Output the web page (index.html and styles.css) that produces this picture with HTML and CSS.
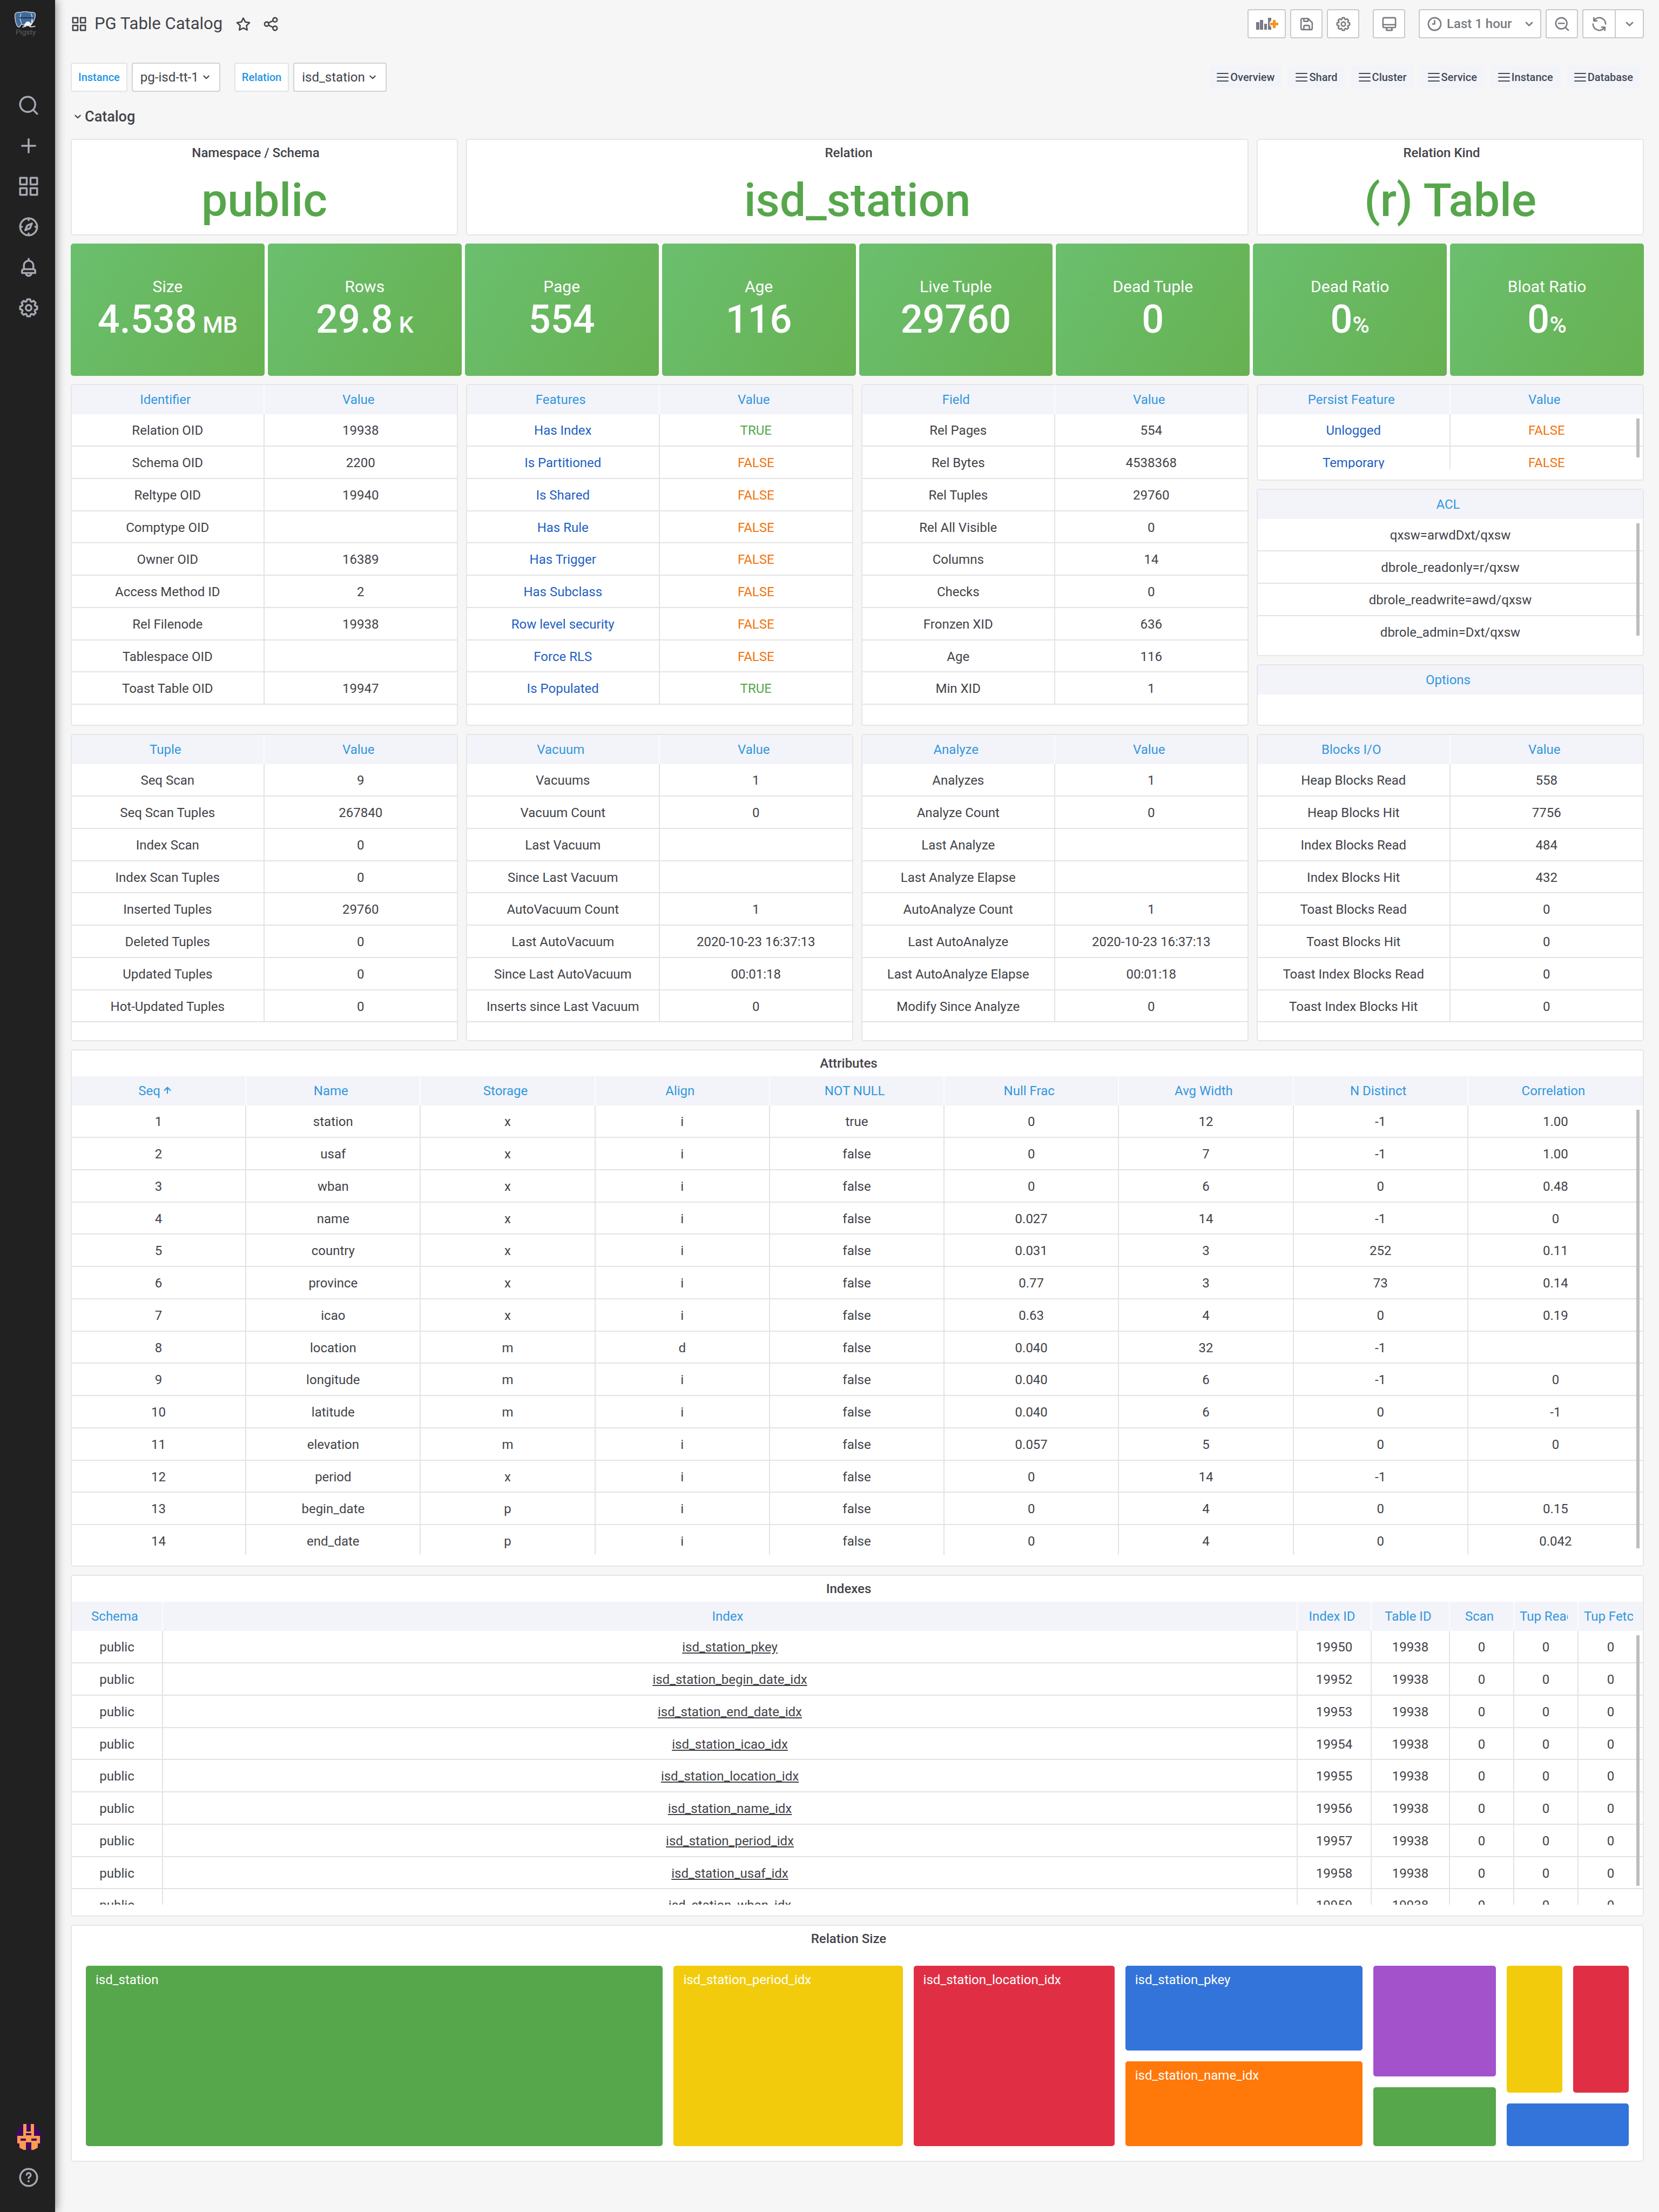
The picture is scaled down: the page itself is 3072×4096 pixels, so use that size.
FILE: index.html
```html
<!DOCTYPE html>
<html lang="en">
<head>
<meta charset="utf-8">
<title>PG Table Catalog</title>
<link rel="stylesheet" href="styles.css">
</head>
<body>
<svg class="sprite" aria-hidden="true">
  <symbol id="i-apps" viewBox="0 0 24 24"><path d="M10,13H3a1,1,0,0,0-1,1v7a1,1,0,0,0,1,1h7a1,1,0,0,0,1-1V14A1,1,0,0,0,10,13ZM9,20H4V15H9ZM21,2H14a1,1,0,0,0-1,1v7a1,1,0,0,0,1,1h7a1,1,0,0,0,1-1V3A1,1,0,0,0,21,2ZM20,9H15V4h5Zm1,4H14a1,1,0,0,0-1,1v7a1,1,0,0,0,1,1h7a1,1,0,0,0,1-1V14A1,1,0,0,0,21,13Zm-1,7H15V15h5ZM10,2H3A1,1,0,0,0,2,3v7a1,1,0,0,0,1,1h7a1,1,0,0,0,1-1V3A1,1,0,0,0,10,2ZM9,9H4V4H9Z"/></symbol>
  <symbol id="i-search" viewBox="0 0 24 24"><path d="M21.71,20.29,18,16.61A9,9,0,1,0,16.61,18l3.68,3.68a1,1,0,0,0,1.42,0A1,1,0,0,0,21.71,20.29ZM11,18a7,7,0,1,1,7-7A7,7,0,0,1,11,18Z"/></symbol>
  <symbol id="i-search-minus" viewBox="0 0 24 24"><path d="M21.71,20.29,18,16.61A9,9,0,1,0,16.61,18l3.68,3.68a1,1,0,0,0,1.42,0A1,1,0,0,0,21.71,20.29ZM11,18a7,7,0,1,1,7-7A7,7,0,0,1,11,18ZM15,10H7a1,1,0,0,0,0,2h8a1,1,0,0,0,0-2Z"/></symbol>
  <symbol id="i-plus" viewBox="0 0 24 24"><path d="M19,11H13V5a1,1,0,0,0-2,0v6H5a1,1,0,0,0,0,2h6v6a1,1,0,0,0,2,0V13h6a1,1,0,0,0,0-2Z"/></symbol>
  <symbol id="i-compass" viewBox="0 0 24 24"><path d="M12,2A10,10,0,1,0,22,12,10,10,0,0,0,12,2Zm1,17.93V19a1,1,0,0,0-2,0v.93A8,8,0,0,1,4.07,13H5a1,1,0,0,0,0-2H4.07A8,8,0,0,1,11,4.07V5a1,1,0,0,0,2,0V4.07A8,8,0,0,1,19.93,11H19a1,1,0,0,0,0,2h.93A8,8,0,0,1,13,19.93ZM15.14,7.55l-5,2.12a1,1,0,0,0-.52.52l-2.12,5a1,1,0,0,0,.21,1.1,1,1,0,0,0,.7.3.93.93,0,0,0,.4-.09l5-2.12a1,1,0,0,0,.52-.52l2.12-5a1,1,0,0,0-1.31-1.31Zm-2.49,5.1-2.28,1,1-2.28,2.28-1Z"/></symbol>
  <symbol id="i-bell" viewBox="0 0 24 24"><path d="M18,13.18V10a6,6,0,0,0-5-5.91V3a1,1,0,0,0-2,0V4.09A6,6,0,0,0,6,10v3.18A3,3,0,0,0,4,16v2a1,1,0,0,0,1,1H8.14a4,4,0,0,0,7.72,0H19a1,1,0,0,0,1-1V16A3,3,0,0,0,18,13.18ZM8,10a4,4,0,0,1,8,0v3H8Zm4,10a2,2,0,0,1-1.72-1h3.44A2,2,0,0,1,12,20Zm6-3H6V16a1,1,0,0,1,1-1H17a1,1,0,0,1,1,1Z"/></symbol>
  <symbol id="i-cog" viewBox="0 0 24 24"><path d="M21.32,9.55l-1.89-.63.89-1.78A1,1,0,0,0,20.13,6L18,3.87a1,1,0,0,0-1.15-.19l-1.78.89-.63-1.89A1,1,0,0,0,13.5,2h-3a1,1,0,0,0-.95.68L8.92,4.57,7.14,3.68A1,1,0,0,0,6,3.87L3.87,6a1,1,0,0,0-.19,1.15l.89,1.78-1.89.63A1,1,0,0,0,2,10.5v3a1,1,0,0,0,.68.95l1.89.63-.89,1.78A1,1,0,0,0,3.87,18L6,20.13a1,1,0,0,0,1.15.19l1.78-.89.63,1.89a1,1,0,0,0,.95.68h3a1,1,0,0,0,.95-.68l.63-1.89,1.78.89A1,1,0,0,0,18,20.13L20.13,18a1,1,0,0,0,.19-1.15l-.89-1.78,1.89-.63A1,1,0,0,0,22,13.5v-3A1,1,0,0,0,21.32,9.55ZM20,12.78l-1.2.4A2,2,0,0,0,17.64,16l.57,1.14-1.1,1.1L16,17.64a2,2,0,0,0-2.79,1.16l-.4,1.2H11.22l-.4-1.2A2,2,0,0,0,8,17.64l-1.14.57-1.1-1.1L6.36,16A2,2,0,0,0,5.2,13.18L4,12.78V11.22l1.2-.4A2,2,0,0,0,6.36,8L5.79,6.89l1.1-1.1L8,6.36A2,2,0,0,0,10.82,5.2l.4-1.2h1.56l.4,1.2A2,2,0,0,0,16,6.36l1.14-.57,1.1,1.1L17.64,8a2,2,0,0,0,1.16,2.79l1.2.4ZM12,8a4,4,0,1,0,4,4A4,4,0,0,0,12,8Zm0,6a2,2,0,1,1,2-2A2,2,0,0,1,12,14Z"/></symbol>
  <symbol id="i-help" viewBox="0 0 24 24"><path d="M12,2A10,10,0,1,0,22,12,10,10,0,0,0,12,2Zm0,18a8,8,0,1,1,8-8A8,8,0,0,1,12,20Z"/><circle cx="12" cy="16" r="1.1"/><path d="M9.9,9.2a2.2,2.2,0,1,1,3.2,2.2c-.7.4-1.1.8-1.1,1.5" fill="none" stroke="currentColor" stroke-width="1.9" stroke-linecap="round"/></symbol>
  <symbol id="i-star" viewBox="0 0 24 24"><path d="M22,9.67A1,1,0,0,0,21.14,9l-5.69-.83L12.9,3a1,1,0,0,0-1.8,0L8.55,8.16,2.86,9a1,1,0,0,0-.81.68,1,1,0,0,0,.25,1l4.13,4-1,5.68A1,1,0,0,0,6.9,21.44L12,18.77l5.1,2.67a.93.93,0,0,0,.46.12,1,1,0,0,0,.59-.19,1,1,0,0,0,.4-1l-1-5.68,4.13-4A1,1,0,0,0,22,9.67Zm-6.15,4a1,1,0,0,0-.29.88l.72,4.2-3.76-2a1.06,1.06,0,0,0-.94,0l-3.76,2,.72-4.2a1,1,0,0,0-.29-.88l-3-3,4.21-.61a1,1,0,0,0,.76-.55L12,5.7l1.88,3.82a1,1,0,0,0,.76.55l4.21.61Z"/></symbol>
  <symbol id="i-share" viewBox="0 0 24 24"><path d="M18,14a4,4,0,0,0-3.08,1.48l-5.1-2.35a3.64,3.64,0,0,0,0-2.26l5.1-2.35A4,4,0,1,0,14,6a4.17,4.17,0,0,0,.07.71L8.79,9.14a4,4,0,1,0,0,5.72l5.28,2.43A4.17,4.17,0,0,0,14,18a4,4,0,1,0,4-4ZM18,4a2,2,0,1,1-2,2A2,2,0,0,1,18,4ZM6,14a2,2,0,1,1,2-2A2,2,0,0,1,6,14Zm12,6a2,2,0,1,1,2-2A2,2,0,0,1,18,20Z"/></symbol>
  <symbol id="i-save" viewBox="0 0 24 24"><path d="M20.71,9.29l-6-6a1,1,0,0,0-.32-.21A1.09,1.09,0,0,0,14,3H6A3,3,0,0,0,3,6V18a3,3,0,0,0,3,3H18a3,3,0,0,0,3-3V10A1,1,0,0,0,20.71,9.29ZM9,5h4V7H9Zm6,14H9V16a1,1,0,0,1,1-1h4a1,1,0,0,1,1,1Zm4-1a1,1,0,0,1-1,1H17V16a3,3,0,0,0-3-3H10a3,3,0,0,0-3,3v3H6a1,1,0,0,1-1-1V6A1,1,0,0,1,6,5H7V8A1,1,0,0,0,8,9h6a1,1,0,0,0,1-1V6.41l4,4Z"/></symbol>
  <symbol id="i-monitor" viewBox="0 0 24 24"><path d="M19,2H5A3,3,0,0,0,2,5V15a3,3,0,0,0,3,3H7.64l-.58,1a2,2,0,0,0,0,2,2,2,0,0,0,1.75,1h6.46A2,2,0,0,0,17,21a2,2,0,0,0,0-2l-.59-1H19a3,3,0,0,0,3-3V5A3,3,0,0,0,19,2ZM8.77,20,10,18H14l1.2,2ZM20,15a1,1,0,0,1-1,1H5a1,1,0,0,1-1-1V14H20Zm0-3H4V5A1,1,0,0,1,5,4H19a1,1,0,0,1,1,1Z"/></symbol>
  <symbol id="i-clock" viewBox="0 0 24 24"><path d="M12,2A10,10,0,1,0,22,12,10,10,0,0,0,12,2Zm0,18a8,8,0,1,1,8-8A8,8,0,0,1,12,20ZM12,6a1,1,0,0,0-1,1v4H9a1,1,0,0,0,0,2h3a1,1,0,0,0,1-1V7A1,1,0,0,0,12,6Z"/></symbol>
  <symbol id="i-sync" viewBox="0 0 24 24"><path d="M19.91,15.51H15.38a1,1,0,0,0,0,2h2.4A8,8,0,0,1,4,12a1,1,0,0,0-2,0,10,10,0,0,0,16.88,7.23V21a1,1,0,0,0,2,0V16.5A1,1,0,0,0,19.91,15.51ZM12,2A10,10,0,0,0,5.12,4.77V3a1,1,0,0,0-2,0V7.5a1,1,0,0,0,1,1h4.5a1,1,0,0,0,0-2H6.22A8,8,0,0,1,20,12a1,1,0,0,0,2,0A10,10,0,0,0,12,2Z"/></symbol>
  <symbol id="i-angle" viewBox="0 0 24 24"><path d="M17,9.17a1,1,0,0,0-1.41,0L12,12.71,8.46,9.17a1,1,0,0,0-1.41,0,1,1,0,0,0,0,1.42l4.24,4.24a1,1,0,0,0,1.42,0L17,10.59A1,1,0,0,0,17,9.17Z"/></symbol>
  <symbol id="i-arrow" viewBox="0 0 24 24"><path d="M17.71,11.29l-5-5a1,1,0,0,0-.33-.21,1,1,0,0,0-.76,0,1,1,0,0,0-.33.21l-5,5a1,1,0,0,0,1.42,1.42L11,9.41V17a1,1,0,0,0,2,0V9.41l3.29,3.3a1,1,0,0,0,1.42,0A1,1,0,0,0,17.71,11.29Z"/></symbol>
  <symbol id="i-bars" viewBox="0 0 22 16"><path d="M1,0H21a1,1,0,0,1,0,2H1a1,1,0,0,1,0-2ZM1,7H21a1,1,0,0,1,0,2H1a1,1,0,0,1,0-2ZM1,14H21a1,1,0,0,1,0,2H1a1,1,0,0,1,0-2Z"/></symbol>
</svg>

<nav class="sidebar" aria-label="Main menu">
  <a class="logo" href="#" aria-label="Home">
    <svg viewBox="0 0 48 55" width="41" height="47">
      <path d="M4 3C1 4 0 9 1 15c1 8 3 15 6 18 2 2 4 1 5-1l3-5 4 3h13l8-7c3-5 5-11 5-16 0-4-4-5-9-5-4 0-6 0-9-1-4-1-8-1-12 1C12 2 8 1 4 3Z" fill="#3f6a9c" stroke="#dce4ee" stroke-width="1.5"/>
      <path d="M14 5c-3 5-3 14 1 20M35 4c4 5 4 14 1 20" fill="none" stroke="#dce4ee" stroke-width="1.5"/>
      <path d="M10 14h32" stroke="#1c2a3c" stroke-width="2"/>
      <path d="M24 34c-2-5 0-11 5-11s7 6 4 10c4 1 8 1 12-1M17 34c5 1 6-3 5-7M35 30c3-3 4-7 3-11" fill="none" stroke="#f2f5f9" stroke-width="2"/>
      <path d="M24 27c2-4 8-4 10 0l-2 5h-7Z" fill="#f2f5f9"/>
      <text x="24" y="50" text-anchor="middle" font-size="16" fill="#5d5f63">Pigsty</text>
    </svg>
  </a>
  <div class="menu">
    <a href="#" aria-label="Search"><svg class="icon i42"><use href="#i-search"/></svg></a>
    <a href="#" aria-label="Create"><svg class="icon i42"><use href="#i-plus"/></svg></a>
    <a href="#" aria-label="Dashboards"><svg class="icon i42"><use href="#i-apps"/></svg></a>
    <a href="#" aria-label="Explore"><svg class="icon i42"><use href="#i-compass"/></svg></a>
    <a href="#" aria-label="Alerting"><svg class="icon i42"><use href="#i-bell"/></svg></a>
    <a href="#" aria-label="Configuration"><svg class="icon i42"><use href="#i-cog"/></svg></a>
  </div>
  <div class="menu menu-bottom">
    <a href="#" aria-label="Profile">
      <svg viewBox="0 0 48 54" width="48" height="54">
        <ellipse cx="24" cy="26" rx="24" ry="25" fill="#3d0a5c"/>
        <path d="M14 2h6v14h8V2h6v22h11v14h-4v8l-8 4h-4V36h-10v14h-4l-8-4v-8H3V24h11Z" fill="#ff9a52"/>
        <path d="M19 19h10v4H19ZM9 29h10v4H9ZM29 29h10v4H29Z" fill="#3d0a5c"/>
      </svg>
    </a>
    <a href="#" aria-label="Help"><svg class="icon i42"><use href="#i-help"/></svg></a>
  </div>
</nav>

<main class="page">
  <header class="toolbar">
    <div class="heading">
      <svg class="icon i31"><use href="#i-apps"/></svg>
      <h1>PG Table Catalog</h1>
      <button class="plain" aria-label="Mark as favorite"><svg class="icon i31"><use href="#i-star"/></svg></button>
      <button class="plain" aria-label="Share dashboard"><svg class="icon i31"><use href="#i-share"/></svg></button>
    </div>
    <div class="tools">
      <div class="group">
        <button class="tool add" aria-label="Add panel">
          <svg viewBox="0 0 42 24" width="42" height="24">
            <path d="M1 9h6v14H1ZM8 5h6v18H8ZM16 12h5v11h-5ZM23 1h6v5l-3 3v6l3 3v5h-6Z" fill="#787887"/>
            <path d="M32 5h5v5h5v5h-5v5h-5v-5h-5v-5h5Z" fill="#f7941e"/>
          </svg>
        </button>
        <button class="tool" aria-label="Save dashboard"><svg class="icon i31"><use href="#i-save"/></svg></button>
        <button class="tool" aria-label="Dashboard settings"><svg class="icon i31"><use href="#i-cog"/></svg></button>
      </div>
      <button class="tool" aria-label="Cycle view mode"><svg class="icon i31"><use href="#i-monitor"/></svg></button>
      <div class="group">
        <button class="tool time"><svg class="icon i31"><use href="#i-clock"/></svg><span>Last 1 hour</span><svg class="icon i31"><use href="#i-angle"/></svg></button>
        <button class="tool" aria-label="Zoom out"><svg class="icon i31"><use href="#i-search-minus"/></svg></button>
        <div class="split">
          <button class="tool" aria-label="Refresh"><svg class="icon i31"><use href="#i-sync"/></svg></button>
          <button class="tool narrow" aria-label="Refresh interval"><svg class="icon i31"><use href="#i-angle"/></svg></button>
        </div>
      </div>
    </div>
  </header>

  <div class="submenu">
    <div class="vars">
      <div class="var">
        <label for="v-ins">Instance</label>
        <span class="pick"><select id="v-ins"><option>pg-isd-tt-1</option></select><svg class="icon i26"><use href="#i-angle"/></svg></span>
      </div>
      <div class="var">
        <label for="v-rel">Relation</label>
        <span class="pick"><select id="v-rel"><option>isd_station</option></select><svg class="icon i26"><use href="#i-angle"/></svg></span>
      </div>
    </div>
    <nav class="links" aria-label="Dashboard links">
      <a href="#"><svg class="icon bars"><use href="#i-bars"/></svg>Overview</a>
      <a href="#"><svg class="icon bars"><use href="#i-bars"/></svg>Shard</a>
      <a href="#"><svg class="icon bars"><use href="#i-bars"/></svg>Cluster</a>
      <a href="#"><svg class="icon bars"><use href="#i-bars"/></svg>Service</a>
      <a href="#"><svg class="icon bars"><use href="#i-bars"/></svg>Instance</a>
      <a href="#"><svg class="icon bars"><use href="#i-bars"/></svg>Database</a>
    </nav>
  </div>

  <h2 class="row-title"><svg class="icon i26"><use href="#i-angle"/></svg>Catalog</h2>

  <div class="dash">
    <section class="panel h-text">
      <h3>Namespace / Schema</h3>
      <p class="big">public</p>
    </section>
    <section class="panel h-text wide">
      <h3>Relation</h3>
      <p class="big">isd_station</p>
    </section>
    <section class="panel h-text">
      <h3>Relation Kind</h3>
      <p class="big">(r) Table</p>
    </section>

    <section class="stats full">
      <div class="stat"><span class="name">Size</span><span class="value">4.538<small> MB</small></span></div>
      <div class="stat"><span class="name">Rows</span><span class="value">29.8<small> K</small></span></div>
      <div class="stat"><span class="name">Page</span><span class="value">554</span></div>
      <div class="stat"><span class="name">Age</span><span class="value">116</span></div>
      <div class="stat"><span class="name">Live Tuple</span><span class="value">29760</span></div>
      <div class="stat"><span class="name">Dead Tuple</span><span class="value">0</span></div>
      <div class="stat"><span class="name">Dead Ratio</span><span class="value">0<small>%</small></span></div>
      <div class="stat"><span class="name">Bloat Ratio</span><span class="value">0<small>%</small></span></div>
    </section>

    <section class="panel h-table">
      <div class="scroll">
        <table>
          <thead><tr><th>Identifier</th><th>Value</th></tr></thead>
          <tbody>
            <tr><td>Relation OID</td><td>19938</td></tr>
            <tr><td>Schema OID</td><td>2200</td></tr>
            <tr><td>Reltype OID</td><td>19940</td></tr>
            <tr><td>Comptype OID</td><td></td></tr>
            <tr><td>Owner OID</td><td>16389</td></tr>
            <tr><td>Access Method ID</td><td>2</td></tr>
            <tr><td>Rel Filenode</td><td>19938</td></tr>
            <tr><td>Tablespace OID</td><td></td></tr>
            <tr><td>Toast Table OID</td><td>19947</td></tr>
          </tbody>
        </table>
      </div>
    </section>
    <section class="panel h-table">
      <div class="scroll">
        <table class="flags">
          <thead><tr><th>Features</th><th>Value</th></tr></thead>
          <tbody>
            <tr><td>Has Index</td><td class="yes">TRUE</td></tr>
            <tr><td>Is Partitioned</td><td class="no">FALSE</td></tr>
            <tr><td>Is Shared</td><td class="no">FALSE</td></tr>
            <tr><td>Has Rule</td><td class="no">FALSE</td></tr>
            <tr><td>Has Trigger</td><td class="no">FALSE</td></tr>
            <tr><td>Has Subclass</td><td class="no">FALSE</td></tr>
            <tr><td>Row level security</td><td class="no">FALSE</td></tr>
            <tr><td>Force RLS</td><td class="no">FALSE</td></tr>
            <tr><td>Is Populated</td><td class="yes">TRUE</td></tr>
          </tbody>
        </table>
      </div>
    </section>
    <section class="panel h-table">
      <div class="scroll">
        <table>
          <thead><tr><th>Field</th><th>Value</th></tr></thead>
          <tbody>
            <tr><td>Rel Pages</td><td>554</td></tr>
            <tr><td>Rel Bytes</td><td>4538368</td></tr>
            <tr><td>Rel Tuples</td><td>29760</td></tr>
            <tr><td>Rel All Visible</td><td>0</td></tr>
            <tr><td>Columns</td><td>14</td></tr>
            <tr><td>Checks</td><td>0</td></tr>
            <tr><td>Fronzen XID</td><td>636</td></tr>
            <tr><td>Age</td><td>116</td></tr>
            <tr><td>Min XID</td><td>1</td></tr>
          </tbody>
        </table>
      </div>
    </section>
    <div class="stack">
      <section class="panel h-persist">
        <div class="scroll">
          <table class="flags">
            <thead><tr><th>Persist Feature</th><th>Value</th></tr></thead>
            <tbody>
              <tr><td>Unlogged</td><td class="no">FALSE</td></tr>
              <tr><td>Temporary</td><td class="no">FALSE</td></tr>
            </tbody>
          </table>
          <span class="thumb" style="height:72px"></span>
        </div>
      </section>
      <section class="panel h-acl">
        <div class="scroll">
          <table>
            <thead><tr><th>ACL</th></tr></thead>
            <tbody>
              <tr><td>qxsw=arwdDxt/qxsw</td></tr>
              <tr><td>dbrole_readonly=r/qxsw</td></tr>
              <tr><td>dbrole_readwrite=awd/qxsw</td></tr>
              <tr><td>dbrole_admin=Dxt/qxsw</td></tr>
            </tbody>
          </table>
          <span class="thumb" style="height:208px"></span>
        </div>
      </section>
      <section class="panel grow">
        <div class="scroll">
          <table>
            <thead><tr><th>Options</th></tr></thead>
          </table>
        </div>
      </section>
    </div>

    <section class="panel h-usage">
      <div class="scroll">
        <table>
          <thead><tr><th>Tuple</th><th>Value</th></tr></thead>
          <tbody>
            <tr><td>Seq Scan</td><td>9</td></tr>
            <tr><td>Seq Scan Tuples</td><td>267840</td></tr>
            <tr><td>Index Scan</td><td>0</td></tr>
            <tr><td>Index Scan Tuples</td><td>0</td></tr>
            <tr><td>Inserted Tuples</td><td>29760</td></tr>
            <tr><td>Deleted Tuples</td><td>0</td></tr>
            <tr><td>Updated Tuples</td><td>0</td></tr>
            <tr><td>Hot-Updated Tuples</td><td>0</td></tr>
          </tbody>
        </table>
      </div>
    </section>
    <section class="panel h-usage">
      <div class="scroll">
        <table>
          <thead><tr><th>Vacuum</th><th>Value</th></tr></thead>
          <tbody>
            <tr><td>Vacuums</td><td>1</td></tr>
            <tr><td>Vacuum Count</td><td>0</td></tr>
            <tr><td>Last Vacuum</td><td></td></tr>
            <tr><td>Since Last Vacuum</td><td></td></tr>
            <tr><td>AutoVacuum Count</td><td>1</td></tr>
            <tr><td>Last AutoVacuum</td><td>2020-10-23 16:37:13</td></tr>
            <tr><td>Since Last AutoVacuum</td><td>00:01:18</td></tr>
            <tr><td>Inserts since Last Vacuum</td><td>0</td></tr>
          </tbody>
        </table>
      </div>
    </section>
    <section class="panel h-usage">
      <div class="scroll">
        <table>
          <thead><tr><th>Analyze</th><th>Value</th></tr></thead>
          <tbody>
            <tr><td>Analyzes</td><td>1</td></tr>
            <tr><td>Analyze Count</td><td>0</td></tr>
            <tr><td>Last Analyze</td><td></td></tr>
            <tr><td>Last Analyze Elapse</td><td></td></tr>
            <tr><td>AutoAnalyze Count</td><td>1</td></tr>
            <tr><td>Last AutoAnalyze</td><td>2020-10-23 16:37:13</td></tr>
            <tr><td>Last AutoAnalyze Elapse</td><td>00:01:18</td></tr>
            <tr><td>Modify Since Analyze</td><td>0</td></tr>
          </tbody>
        </table>
      </div>
    </section>
    <section class="panel h-usage">
      <div class="scroll">
        <table>
          <thead><tr><th>Blocks I/O</th><th>Value</th></tr></thead>
          <tbody>
            <tr><td>Heap Blocks Read</td><td>558</td></tr>
            <tr><td>Heap Blocks Hit</td><td>7756</td></tr>
            <tr><td>Index Blocks Read</td><td>484</td></tr>
            <tr><td>Index Blocks Hit</td><td>432</td></tr>
            <tr><td>Toast Blocks Read</td><td>0</td></tr>
            <tr><td>Toast Blocks Hit</td><td>0</td></tr>
            <tr><td>Toast Index Blocks Read</td><td>0</td></tr>
            <tr><td>Toast Index Blocks Hit</td><td>0</td></tr>
          </tbody>
        </table>
      </div>
    </section>

    <section class="panel full h-attrs">
      <h3>Attributes</h3>
      <div class="scroll">
        <table>
          <thead><tr><th>Seq<svg class="icon i26 sort"><use href="#i-arrow"/></svg></th><th>Name</th><th>Storage</th><th>Align</th><th>NOT NULL</th><th>Null Frac</th><th>Avg Width</th><th>N Distinct</th><th>Correlation</th></tr></thead>
          <tbody>
            <tr><td>1</td><td>station</td><td>x</td><td>i</td><td>true</td><td>0</td><td>12</td><td>-1</td><td>1.00</td></tr>
            <tr><td>2</td><td>usaf</td><td>x</td><td>i</td><td>false</td><td>0</td><td>7</td><td>-1</td><td>1.00</td></tr>
            <tr><td>3</td><td>wban</td><td>x</td><td>i</td><td>false</td><td>0</td><td>6</td><td>0</td><td>0.48</td></tr>
            <tr><td>4</td><td>name</td><td>x</td><td>i</td><td>false</td><td>0.027</td><td>14</td><td>-1</td><td>0</td></tr>
            <tr><td>5</td><td>country</td><td>x</td><td>i</td><td>false</td><td>0.031</td><td>3</td><td>252</td><td>0.11</td></tr>
            <tr><td>6</td><td>province</td><td>x</td><td>i</td><td>false</td><td>0.77</td><td>3</td><td>73</td><td>0.14</td></tr>
            <tr><td>7</td><td>icao</td><td>x</td><td>i</td><td>false</td><td>0.63</td><td>4</td><td>0</td><td>0.19</td></tr>
            <tr><td>8</td><td>location</td><td>m</td><td>d</td><td>false</td><td>0.040</td><td>32</td><td>-1</td><td></td></tr>
            <tr><td>9</td><td>longitude</td><td>m</td><td>i</td><td>false</td><td>0.040</td><td>6</td><td>-1</td><td>0</td></tr>
            <tr><td>10</td><td>latitude</td><td>m</td><td>i</td><td>false</td><td>0.040</td><td>6</td><td>0</td><td>-1</td></tr>
            <tr><td>11</td><td>elevation</td><td>m</td><td>i</td><td>false</td><td>0.057</td><td>5</td><td>0</td><td>0</td></tr>
            <tr><td>12</td><td>period</td><td>x</td><td>i</td><td>false</td><td>0</td><td>14</td><td>-1</td><td></td></tr>
            <tr><td>13</td><td>begin_date</td><td>p</td><td>i</td><td>false</td><td>0</td><td>4</td><td>0</td><td>0.15</td></tr>
            <tr><td>14</td><td>end_date</td><td>p</td><td>i</td><td>false</td><td>0</td><td>4</td><td>0</td><td>0.042</td></tr>
          </tbody>
        </table>
        <span class="thumb" style="height:812px"></span>
      </div>
    </section>

    <section class="panel full h-indexes">
      <h3>Indexes</h3>
      <div class="scroll">
        <table>
          <colgroup><col class="c-schema"><col><col class="c-index"><col class="c-table"><col class="c-num"><col class="c-num"><col class="c-num"></colgroup>
          <thead><tr><th>Schema</th><th>Index</th><th>Index ID</th><th>Table ID</th><th>Scan</th><th><div>Tup Read</div></th><th><div>Tup Fetch</div></th></tr></thead>
          <tbody>
            <tr><td>public</td><td><a href="#">isd_station_pkey</a></td><td>19950</td><td>19938</td><td>0</td><td>0</td><td>0</td></tr>
            <tr><td>public</td><td><a href="#">isd_station_begin_date_idx</a></td><td>19952</td><td>19938</td><td>0</td><td>0</td><td>0</td></tr>
            <tr><td>public</td><td><a href="#">isd_station_end_date_idx</a></td><td>19953</td><td>19938</td><td>0</td><td>0</td><td>0</td></tr>
            <tr><td>public</td><td><a href="#">isd_station_icao_idx</a></td><td>19954</td><td>19938</td><td>0</td><td>0</td><td>0</td></tr>
            <tr><td>public</td><td><a href="#">isd_station_location_idx</a></td><td>19955</td><td>19938</td><td>0</td><td>0</td><td>0</td></tr>
            <tr><td>public</td><td><a href="#">isd_station_name_idx</a></td><td>19956</td><td>19938</td><td>0</td><td>0</td><td>0</td></tr>
            <tr><td>public</td><td><a href="#">isd_station_period_idx</a></td><td>19957</td><td>19938</td><td>0</td><td>0</td><td>0</td></tr>
            <tr><td>public</td><td><a href="#">isd_station_usaf_idx</a></td><td>19958</td><td>19938</td><td>0</td><td>0</td><td>0</td></tr>
            <tr><td>public</td><td><a href="#">isd_station_wban_idx</a></td><td>19959</td><td>19938</td><td>0</td><td>0</td><td>0</td></tr>
          </tbody>
        </table>
        <span class="thumb" style="height:464px"></span>
      </div>
    </section>

    <section class="panel full h-map">
      <h3>Relation Size</h3>
      <div class="treemap">
        <div class="leaf green" style="flex-grow:1068">isd_station</div>
        <div class="leaf yellow" style="flex-grow:424">isd_station_period_idx</div>
        <div class="leaf red" style="flex-grow:372">isd_station_location_idx</div>
        <div class="branch" style="flex-grow:439">
          <div class="leaf blue" style="flex-grow:157">isd_station_pkey</div>
          <div class="leaf orange" style="flex-grow:157">isd_station_name_idx</div>
        </div>
        <div class="branch" style="flex-grow:227">
          <div class="leaf purple" style="flex-grow:205"></div>
          <div class="leaf green" style="flex-grow:109"></div>
        </div>
        <div class="branch" style="flex-grow:226">
          <div class="twig" style="flex-grow:235">
            <div class="leaf yellow" style="flex-grow:1"></div>
            <div class="leaf red" style="flex-grow:1"></div>
          </div>
          <div class="leaf blue" style="flex-grow:79"></div>
        </div>
      </div>
    </section>
  </div>
</main>
</body>
</html>
```
FILE: styles.css
```css
* { box-sizing: border-box; }

body {
  margin: 0;
  display: grid;
  grid-template-columns: 102px minmax(0, 1fr);
  background: #f6f6f6;
  color: #424349;
  font: 24px/30px Roboto, "Liberation Sans", sans-serif;
}

h1, h2, h3, p { margin: 0; }
button, select { font: inherit; color: inherit; }
a { color: inherit; }

.sprite { position: absolute; width: 0; height: 0; }
.icon { display: block; flex: none; fill: currentColor; }
.i26 { width: 26px; height: 26px; }
.i31 { width: 31px; height: 31px; }
.i42 { width: 42px; height: 42px; }

/* Side menu */
.sidebar {
  position: sticky;
  top: 0;
  height: 100vh;
  display: flex;
  flex-direction: column;
  align-items: center;
  padding: 21px 0 43px 4px;
  background: #212121;
  color: #a6a9b1;
  box-shadow: 0 0 18px #777;
  z-index: 1;
}
.logo { margin-right: 12px; height: 47px; }
.logo svg { display: block; }
.menu {
  display: flex;
  flex-direction: column;
  gap: 33px;
  margin-top: 106px;
}
.menu a { display: flex; justify-content: center; color: inherit; }
.menu-bottom { margin-top: auto; gap: 26px; }

/* Page frame */
.page { padding: 17px 28px 93px 29px; }

.toolbar {
  display: flex;
  justify-content: space-between;
  align-items: center;
  height: 54px;
}
.heading { display: flex; align-items: center; }
h1 { margin: 0 23px 0 13px; font-size: 31px; line-height: 36px; font-weight: 400; }
.plain { padding: 0; border: 0; background: none; margin-right: 20px; }
.tools { display: flex; gap: 25px; color: #7a7b80; }
.group { display: flex; gap: 8px; }
.tool {
  display: flex;
  align-items: center;
  justify-content: center;
  width: 60px;
  height: 54px;
  padding: 0;
  background: #fff;
  border: 2px solid #c9cacd;
  border-radius: 4px;
}
.add { width: 71px; }
.time { width: 227px; justify-content: flex-start; padding-left: 12px; font-weight: 500; }
.time span { margin: 0 16px 0 7px; }
.split { display: flex; }
.split .tool:first-child { border-right: 0; border-radius: 4px 0 0 4px; }
.narrow { width: 54px; border-radius: 0 4px 4px 0; }

.submenu {
  display: flex;
  justify-content: space-between;
  align-items: center;
  margin-top: 45px;
}
.vars { display: flex; gap: 26px; }
.var { display: flex; gap: 8px; }
.var label {
  height: 54px;
  padding: 0 12px;
  border: 2px solid #e3e4e6;
  border-radius: 4px;
  background: #fff;
  color: #2494e3;
  font-size: 20px;
  font-weight: 500;
  line-height: 50px;
}
.pick { position: relative; display: block; }
.pick select {
  appearance: none;
  height: 54px;
  padding: 0 38px 0 14px;
  border: 2px solid #d2d3d6;
  border-radius: 4px;
  background: #fff;
}
.pick .icon { position: absolute; right: 13px; top: 14px; pointer-events: none; }
.links { display: flex; gap: 13px; padding-right: 7px; }
.links a {
  display: flex;
  align-items: center;
  gap: 3px;
  height: 44px;
  padding: 0 13px;
  border-radius: 4px;
  background: #f3f3fa;
  color: #424a54;
  font-size: 20px;
  font-weight: 500;
  text-decoration: none;
}
.bars { width: 22px; height: 16px; }

.row-title {
  display: flex;
  align-items: center;
  height: 36px;
  margin: 28px 0 23px;
  font-size: 27px;
  font-weight: 500;
}

/* Panels */
.dash {
  display: grid;
  grid-template-columns: repeat(4, minmax(0, 1fr));
  gap: 15px;
}
.panel {
  display: flex;
  flex-direction: column;
  background: #fff;
  border: 2px solid #e6e6e9;
  border-radius: 5px;
  min-width: 0;
}
.wide { grid-column: span 2; }
.full { grid-column: 1 / -1; }
.h-text { height: 179px; }
.h-table { height: 633px; }
.h-persist { height: 179px; }
.h-acl { height: 310px; }
.h-usage { height: 569px; }
.h-attrs { height: 958px; }
.h-indexes { height: 633px; }
.h-map { height: 439px; }
.stack { display: flex; flex-direction: column; gap: 15px; }
.grow { flex: 1; }

.panel h3 {
  flex: none;
  height: 48px;
  padding-right: 32px;
  font-size: 24px;
  line-height: 48px;
  font-weight: 500;
  text-align: center;
}
.big {
  flex: 1;
  display: flex;
  align-items: center;
  justify-content: center;
  color: #56a64b;
  font-size: 86px;
  line-height: 100px;
  font-weight: 500;
}

.stats {
  display: grid;
  grid-template-columns: repeat(8, minmax(0, 1fr));
  gap: 6px;
  height: 245px;
  background: #fff;
  border-radius: 5px;
}
.stat {
  display: flex;
  flex-direction: column;
  align-items: center;
  justify-content: center;
  border-radius: 5px;
  background: linear-gradient(120deg, #6abf6e, #67b151);
  color: #fff;
}
.stat .name { font-size: 30px; line-height: 36px; }
.stat .value { font-size: 72px; line-height: 86px; font-weight: 500; }
.stat small { font-size: 43px; line-height: 43px; white-space: pre; }

/* Tables */
.scroll {
  position: relative;
  flex: 1;
  min-height: 0;
  margin-bottom: 20px;
  overflow: hidden;
}
table {
  width: 100%;
  table-layout: fixed;
  border-collapse: separate;
  border-spacing: 0;
}
th {
  height: 54px;
  padding: 0 18px 0 10px;
  background: #f3f3fa;
  border-right: 2px solid #fcfcff;
  color: #3098dd;
  font-weight: 400;
}
th div { overflow: hidden; white-space: nowrap; }
td {
  height: 60px;
  padding: 2px 10px 0;
  border: 0 solid #e3e3e6;
  border-width: 0 2px 2px 0;
  text-align: center;
}
tr:nth-child(4n) td { height: 59px; }
th:last-child, td:last-child { border-right: 0; }
.sort { display: inline-block; vertical-align: -4px; }
.flags td:first-child { color: #1f60c4; }
.flags .yes { color: #56a64b; }
.flags .no { color: #f2740d; }
.c-schema { width: 169px; }
.c-index { width: 137px; }
.c-table { width: 145px; }
.c-num { width: 119px; }
.thumb {
  position: absolute;
  top: 62px;
  right: 6px;
  width: 6px;
  background: #bdbdbf;
}

/* Size treemap */
.treemap {
  flex: 1;
  display: flex;
  gap: 20px;
  margin: 26px 26px 27px;
}
.treemap > *, .branch > *, .twig > * { flex-basis: 0; min-width: 0; min-height: 0; }
.branch { display: flex; flex-direction: column; gap: 20px; }
.twig { display: flex; gap: 20px; }
.leaf {
  border-radius: 5px;
  color: #fff;
  line-height: 52px;
  text-indent: 18px;
  white-space: nowrap;
  overflow: hidden;
}
.green { background: #56a64b; }
.yellow { background: #f2cc0c; }
.red { background: #e02f44; }
.blue { background: #3274d9; }
.orange { background: #ff780a; }
.purple { background: #a352cc; }
```
